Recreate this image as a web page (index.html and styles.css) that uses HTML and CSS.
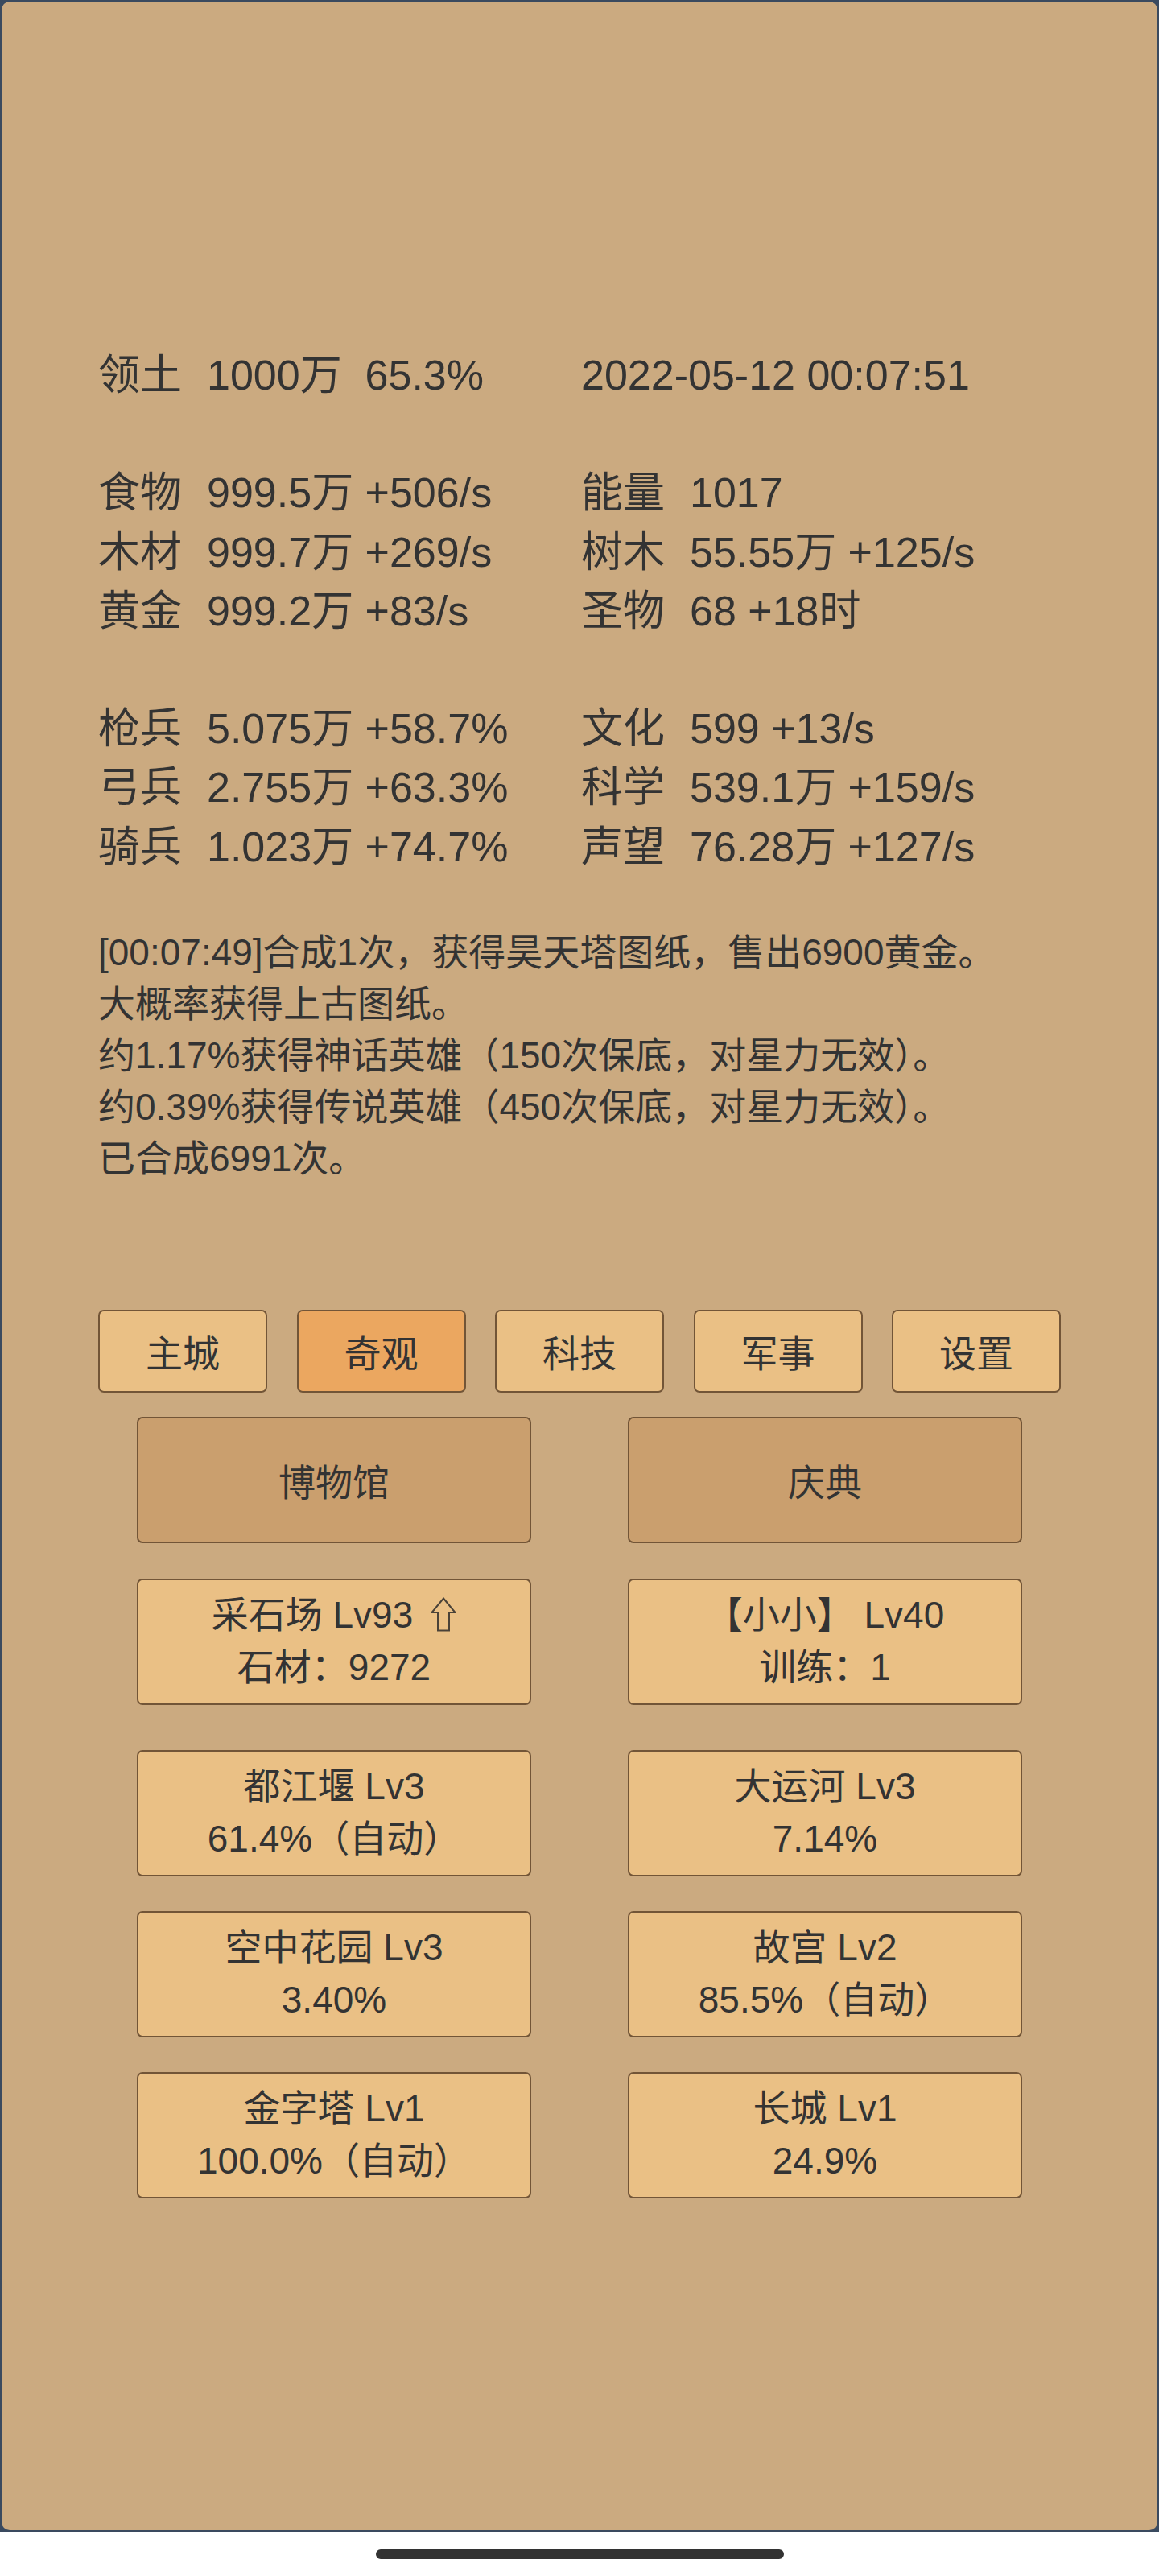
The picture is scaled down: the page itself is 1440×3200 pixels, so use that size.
FILE: index.html
```html
<!DOCTYPE html>
<html lang="zh-CN">
<head>
    <meta charset="UTF-8">
    <meta name="viewport" content="width=device-width, initial-scale=1.0">
    <title>奇观</title>
    <link rel="stylesheet" href="styles.css">
</head>
<body>
    <div class="phone">
        <div class="screen">
            <div class="stats">
                <div class="cell"><span class="label">领土</span>1000万&nbsp;&nbsp;65.3%</div>
                <div class="cell">2022-05-12 00:07:51</div>
                <div class="blank"></div>
                <div class="cell"><span class="label">食物</span>999.5万 +506/s</div>
                <div class="cell"><span class="label">能量</span>1017</div>
                <div class="cell"><span class="label">木材</span>999.7万 +269/s</div>
                <div class="cell"><span class="label">树木</span>55.55万 +125/s</div>
                <div class="cell"><span class="label">黄金</span>999.2万 +83/s</div>
                <div class="cell"><span class="label">圣物</span>68 +18时</div>
                <div class="blank"></div>
                <div class="cell"><span class="label">枪兵</span>5.075万 +58.7%</div>
                <div class="cell"><span class="label">文化</span>599 +13/s</div>
                <div class="cell"><span class="label">弓兵</span>2.755万 +63.3%</div>
                <div class="cell"><span class="label">科学</span>539.1万 +159/s</div>
                <div class="cell"><span class="label">骑兵</span>1.023万 +74.7%</div>
                <div class="cell"><span class="label">声望</span>76.28万 +127/s</div>
            </div>

            <div class="log">
                <div>[00:07:49]合成1次，获得昊天塔图纸，售出6900黄金。</div>
                <div>大概率获得上古图纸。</div>
                <div>约1.17%获得神话英雄（150次保底，对星力无效）。</div>
                <div>约0.39%获得传说英雄（450次保底，对星力无效）。</div>
                <div>已合成6991次。</div>
            </div>

            <div class="tabs">
                <div class="tab">主城</div>
                <div class="tab active">奇观</div>
                <div class="tab">科技</div>
                <div class="tab">军事</div>
                <div class="tab">设置</div>
            </div>

            <div class="big-row">
                <div class="big-btn">博物馆</div>
                <div class="big-btn">庆典</div>
            </div>

            <div class="card-row quarry">
                <div class="card">
                    <div>采石场 Lv93<svg class="up" viewBox="0 0 32 43" width="32" height="43"><polygon points="16,1.5 30.5,19 23,19 23,41.5 9,41.5 9,19 1.5,19" fill="none" stroke="#4a4238" stroke-width="2"/></svg></div>
                    <div>石材：9272</div>
                </div>
                <div class="card">
                    <div>【小小】 Lv40</div>
                    <div>训练：1</div>
                </div>
            </div>

            <div class="wonders">
                <div class="card-row">
                    <div class="card">
                        <div>都江堰 Lv3</div>
                        <div>61.4%（自动）</div>
                    </div>
                    <div class="card">
                        <div>大运河 Lv3</div>
                        <div>7.14%</div>
                    </div>
                </div>
                <div class="card-row">
                    <div class="card">
                        <div>空中花园 Lv3</div>
                        <div>3.40%</div>
                    </div>
                    <div class="card">
                        <div>故宫 Lv2</div>
                        <div>85.5%（自动）</div>
                    </div>
                </div>
                <div class="card-row">
                    <div class="card">
                        <div>金字塔 Lv1</div>
                        <div>100.0%（自动）</div>
                    </div>
                    <div class="card">
                        <div>长城 Lv1</div>
                        <div>24.9%</div>
                    </div>
                </div>
            </div>
        </div>
    </div>
    <div class="home-bar"></div>
</body>
</html>
```

FILE: styles.css
```css
:root {
    --bg: #cbaa80;
    --frame: #3a4a5f;
    --text: #333;
    --card: #eac085;
    --active: #eba760;
    --big: #ca9f6e;
    --edge: #725537;
}
body {
    margin: 0;
    background: #fff;
    font-family: 'Liberation Sans', 'Noto Sans CJK SC', sans-serif;
    color: var(--text);
}
.phone {
    width: 1440px;
    height: 3145px;
    box-sizing: border-box;
    padding: 2px;
    background: var(--frame);
}
.screen {
    height: 100%;
    box-sizing: border-box;
    padding: 428px 120px 0;
    background: var(--bg);
    border-radius: 10px;
}
.stats {
    display: grid;
    grid-template-columns: 600px 600px;
    grid-auto-rows: 73.2px;
    font-size: 52px;
    line-height: 73.2px;
}
.stats .cell {
    white-space: nowrap;
}
.stats .blank {
    grid-column: 1 / -1;
}
.stats .label {
    display: inline-block;
    width: 135px;
}
.log {
    margin-top: 62px;
    font-size: 46px;
}
.log div {
    height: 64px;
    line-height: 64px;
    white-space: nowrap;
}
.tabs {
    display: flex;
    justify-content: space-between;
    margin-top: 156px;
}
.tab, .big-btn, .card {
    box-sizing: border-box;
    border: 2px solid var(--edge);
    border-radius: 7px;
    display: flex;
    flex-direction: column;
    justify-content: center;
    align-items: center;
    font-size: 46px;
}
.tab {
    width: 210px;
    height: 103px;
    background: var(--card);
}
.tab.active {
    background: var(--active);
}
.big-row, .card-row {
    display: flex;
    justify-content: space-between;
    padding: 0 48px;
}
.big-row {
    margin-top: 30px;
}
.big-btn {
    width: 490px;
    height: 157px;
    background: var(--big);
}
.card {
    width: 490px;
    height: 157px;
    background: var(--card);
}
.card div {
    height: 65px;
    line-height: 65px;
    white-space: nowrap;
}
.quarry {
    margin-top: 44px;
}
.wonders {
    display: flex;
    flex-direction: column;
    gap: 43px;
    margin-top: 56px;
}
.up {
    margin-left: 22px;
    vertical-align: -5px;
}
.home-bar {
    width: 507px;
    height: 12px;
    margin: 22px auto 0;
    border-radius: 6px;
    background: #333;
}
```
